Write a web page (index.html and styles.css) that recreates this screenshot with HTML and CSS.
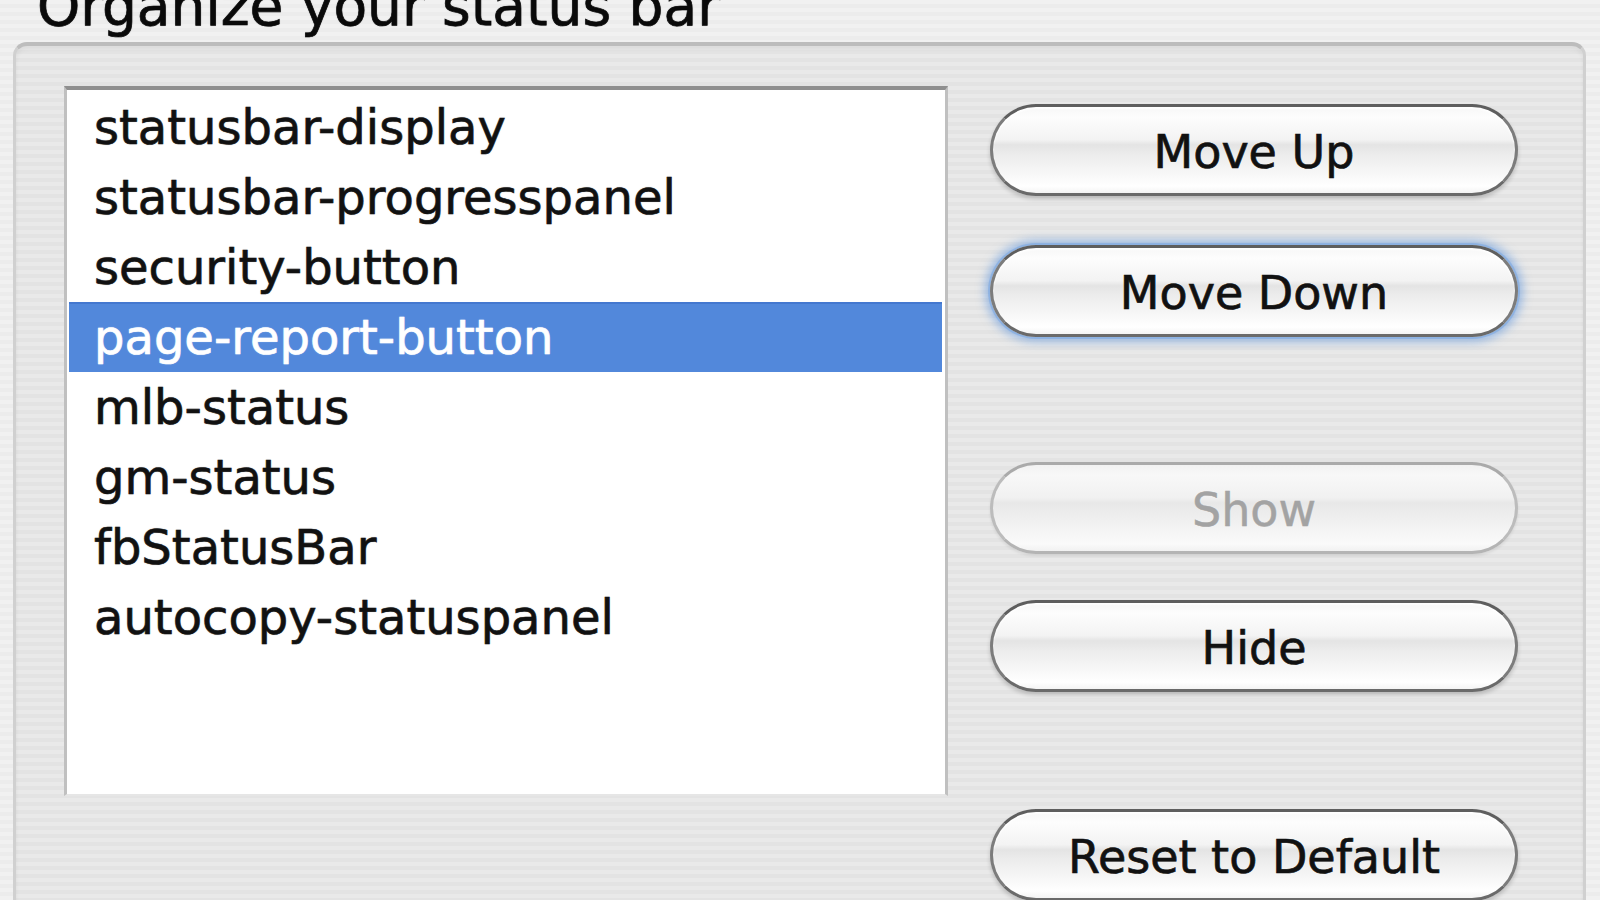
FILE: index.html
```html
<!DOCTYPE html>
<html>
<head>
<meta charset="utf-8">
<title>Organize your status bar</title>
<link rel="stylesheet" href="styles.css">
</head>
<body>
  <div class="title">Organize your status bar</div>
  <div class="group">
    <ul class="list">
      <li class="row">statusbar-display</li>
      <li class="row">statusbar-progresspanel</li>
      <li class="row">security-button</li>
      <li class="row selected">page-report-button</li>
      <li class="row">mlb-status</li>
      <li class="row">gm-status</li>
      <li class="row">fbStatusBar</li>
      <li class="row">autocopy-statuspanel</li>
    </ul>
    <div class="buttons">
      <button class="btn btn-up">Move Up</button>
      <button class="btn btn-down focused">Move Down</button>
      <button class="btn btn-show" disabled>Show</button>
      <button class="btn btn-hide">Hide</button>
      <button class="btn btn-reset">Reset to Default</button>
    </div>
  </div>
</body>
</html>
```

FILE: styles.css
```css
html, body {
  margin: 0;
  padding: 0;
  width: 1600px;
  height: 900px;
  overflow: hidden;
}

body {
  font-family: "DejaVu Sans", "Liberation Sans", sans-serif;
  color: #111;
  background: repeating-linear-gradient(to bottom, #f1f1f1 0 4px, #ececec 4px 8px);
}

.title {
  font-size: 55px;
  line-height: 54px;
  height: 54px;
  margin: -21px 0 0 37px;
  color: #0a0a0a;
  white-space: nowrap;
  -webkit-text-stroke: 0.7px #0a0a0a;
  text-shadow: 0 0 1.5px rgba(0, 0, 0, 0.35);
}

.group {
  margin: 9px 14px 0 13px;
  height: 900px;
  box-sizing: border-box;
  border-style: solid;
  border-width: 4px 3px 0 3px;
  border-color: #bdbdbd #d0d0d0 #d0d0d0 #d0d0d0;
  border-radius: 14px 14px 0 0;
  background: repeating-linear-gradient(to bottom, #e9e9e9 0 4px, #e3e3e3 4px 8px);
  box-shadow: inset 0 3px 4px rgba(0, 0, 0, 0.06);
  display: flex;
  align-items: flex-start;
}

.list {
  list-style: none;
  margin: 40px 0 0 48px;
  padding: 2px 3px 0 2px;
  width: 884px;
  height: 710px;
  box-sizing: border-box;
  background: #fff;
  border-style: solid;
  border-width: 4px 3px 2px 3px;
  border-color: #8f8f8f #c0c0c0 #e6e6e6 #c0c0c0;
}

.row {
  height: 70px;
  line-height: 70px;
  font-size: 48px;
  padding-left: 25px;
  white-space: nowrap;
  color: #111;
  -webkit-text-stroke: 0.6px #111;
  text-shadow: 0 0 1.5px rgba(0, 0, 0, 0.3);
}

.row.selected {
  background: #5288db;
  color: #fff;
  -webkit-text-stroke: 0.6px #fff;
  text-shadow: 0 0 1.5px rgba(255, 255, 255, 0.5);
  box-shadow: inset 0 2px 0 #4478cf;
}

.buttons {
  margin: 58px 0 0 42px;
  width: 528px;
  display: flex;
  flex-direction: column;
}

.btn {
  font-family: "DejaVu Sans", "Liberation Sans", sans-serif;
  font-size: 46px;
  color: #111;
  -webkit-text-stroke: 0.7px #111;
  height: 92px;
  width: 528px;
  box-sizing: border-box;
  padding: 4px 0 0 0;
  border-style: solid;
  border-width: 3px;
  border-color: #5e5e5e #7c7c7c #6a6a6a #7c7c7c;
  border-radius: 46px;
  background: linear-gradient(to bottom,
    #f7f7f7 0%, #fdfdfd 12%, #f3f3f3 38%, #e4e4e4 44%, #ececec 55%, #f6f6f6 75%, #ffffff 92%, #f4f4f4 100%);
  box-shadow: 0 3px 4px rgba(0, 0, 0, 0.18), inset 0 2px 2px rgba(255, 255, 255, 0.9);
  text-align: center;
}

.btn-down {
  margin-top: 49px;
}

.btn.focused {
  box-shadow: 0 0 0 2px rgba(120, 165, 225, 0.55), 0 0 10px 5px rgba(90, 145, 220, 0.55), inset 0 2px 2px rgba(255, 255, 255, 0.9);
}

.btn-show {
  margin-top: 125px;
  color: #a3a3a3;
  -webkit-text-stroke: 0.5px #a3a3a3;
  border-color: #aaaaaa #bcbcbc #b4b4b4 #bcbcbc;
  background: linear-gradient(to bottom,
    #f2f2f2 0%, #f8f8f8 12%, #f1f1f1 38%, #e8e8e8 44%, #ececec 55%, #f4f4f4 75%, #fafafa 92%, #f1f1f1 100%);
  box-shadow: 0 2px 3px rgba(0, 0, 0, 0.08);
}

.btn-hide {
  margin-top: 46px;
}

.btn-reset {
  margin-top: 117px;
}
```
